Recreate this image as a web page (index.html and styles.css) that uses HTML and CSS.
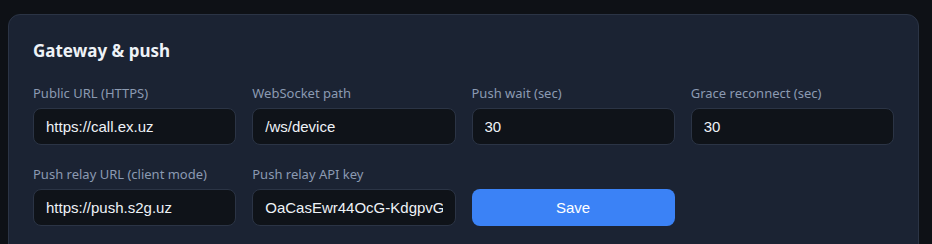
FILE: index.html
```html
<!DOCTYPE html>
<html lang="en">
<head>
    <meta charset="UTF-8">
    <meta name="viewport" content="width=device-width, initial-scale=1.0">
    <title>Gateway & push</title>
    <link rel="stylesheet" href="styles.css">
</head>
<body>
    <div class="page">
        <div class="card">
            <h2>Gateway &amp; push</h2>
            <div class="fields">
                <div class="form-group">
                    <label for="publicUrl">Public URL (HTTPS)</label>
                    <input type="text" id="publicUrl" value="https://call.ex.uz">
                </div>
                <div class="form-group">
                    <label for="wsPath">WebSocket path</label>
                    <input type="text" id="wsPath" value="/ws/device">
                </div>
                <div class="form-group">
                    <label for="pushWait">Push wait (sec)</label>
                    <input type="number" id="pushWait" value="30">
                </div>
                <div class="form-group">
                    <label for="grace">Grace reconnect (sec)</label>
                    <input type="number" id="grace" value="30">
                </div>
                <div class="form-group">
                    <label for="relayUrl">Push relay URL (client mode)</label>
                    <input type="text" id="relayUrl" value="https://push.s2g.uz">
                </div>
                <div class="form-group">
                    <label for="relayKey">Push relay API key</label>
                    <input type="text" id="relayKey" value="OaCasEwr44OcG-KdgpvGx7Lq">
                </div>
                <button class="btn-save" type="button">Save</button>
            </div>
        </div>
    </div>
</body>
</html>
```

FILE: styles.css
```css
body {
    margin: 0;
    background-color: #0e1116;
    font-family: "Noto Sans", "Open Sans", sans-serif;
}
.page {
    padding: 14px 13px 0 8px;
}
.card {
    background-color: #1b2333;
    border: 1px solid #2b3445;
    border-radius: 12px;
    padding: 24px 24px 30px;
    min-height: 260px;
}
h2 {
    margin: 0 0 21px;
    font-size: 17px;
    line-height: 24px;
    font-weight: 700;
    color: #eef2f7;
}
.fields {
    display: grid;
    grid-template-columns: repeat(4, 1fr);
    column-gap: 16px;
    row-gap: 20px;
}
.form-group label {
    display: block;
    margin-bottom: 6px;
    font-size: 13px;
    line-height: 18px;
    color: #8b9ab2;
}
.form-group input {
    display: block;
    width: 100%;
    height: 37px;
    box-sizing: border-box;
    padding: 0 12px;
    background-color: #0f1319;
    border: 1px solid #2b3445;
    border-radius: 8px;
    color: #eef2f7;
    font-family: "Liberation Sans", Arial, sans-serif;
    font-size: 15px;
    outline: none;
    -moz-appearance: textfield;
}
.form-group input::-webkit-inner-spin-button,
.form-group input::-webkit-outer-spin-button {
    -webkit-appearance: none;
    margin: 0;
}
.btn-save {
    align-self: end;
    height: 37px;
    border: none;
    border-radius: 8px;
    background-color: #3b82f6;
    color: #fff;
    font-family: "Liberation Sans", Arial, sans-serif;
    font-size: 15px;
    cursor: pointer;
}
```
